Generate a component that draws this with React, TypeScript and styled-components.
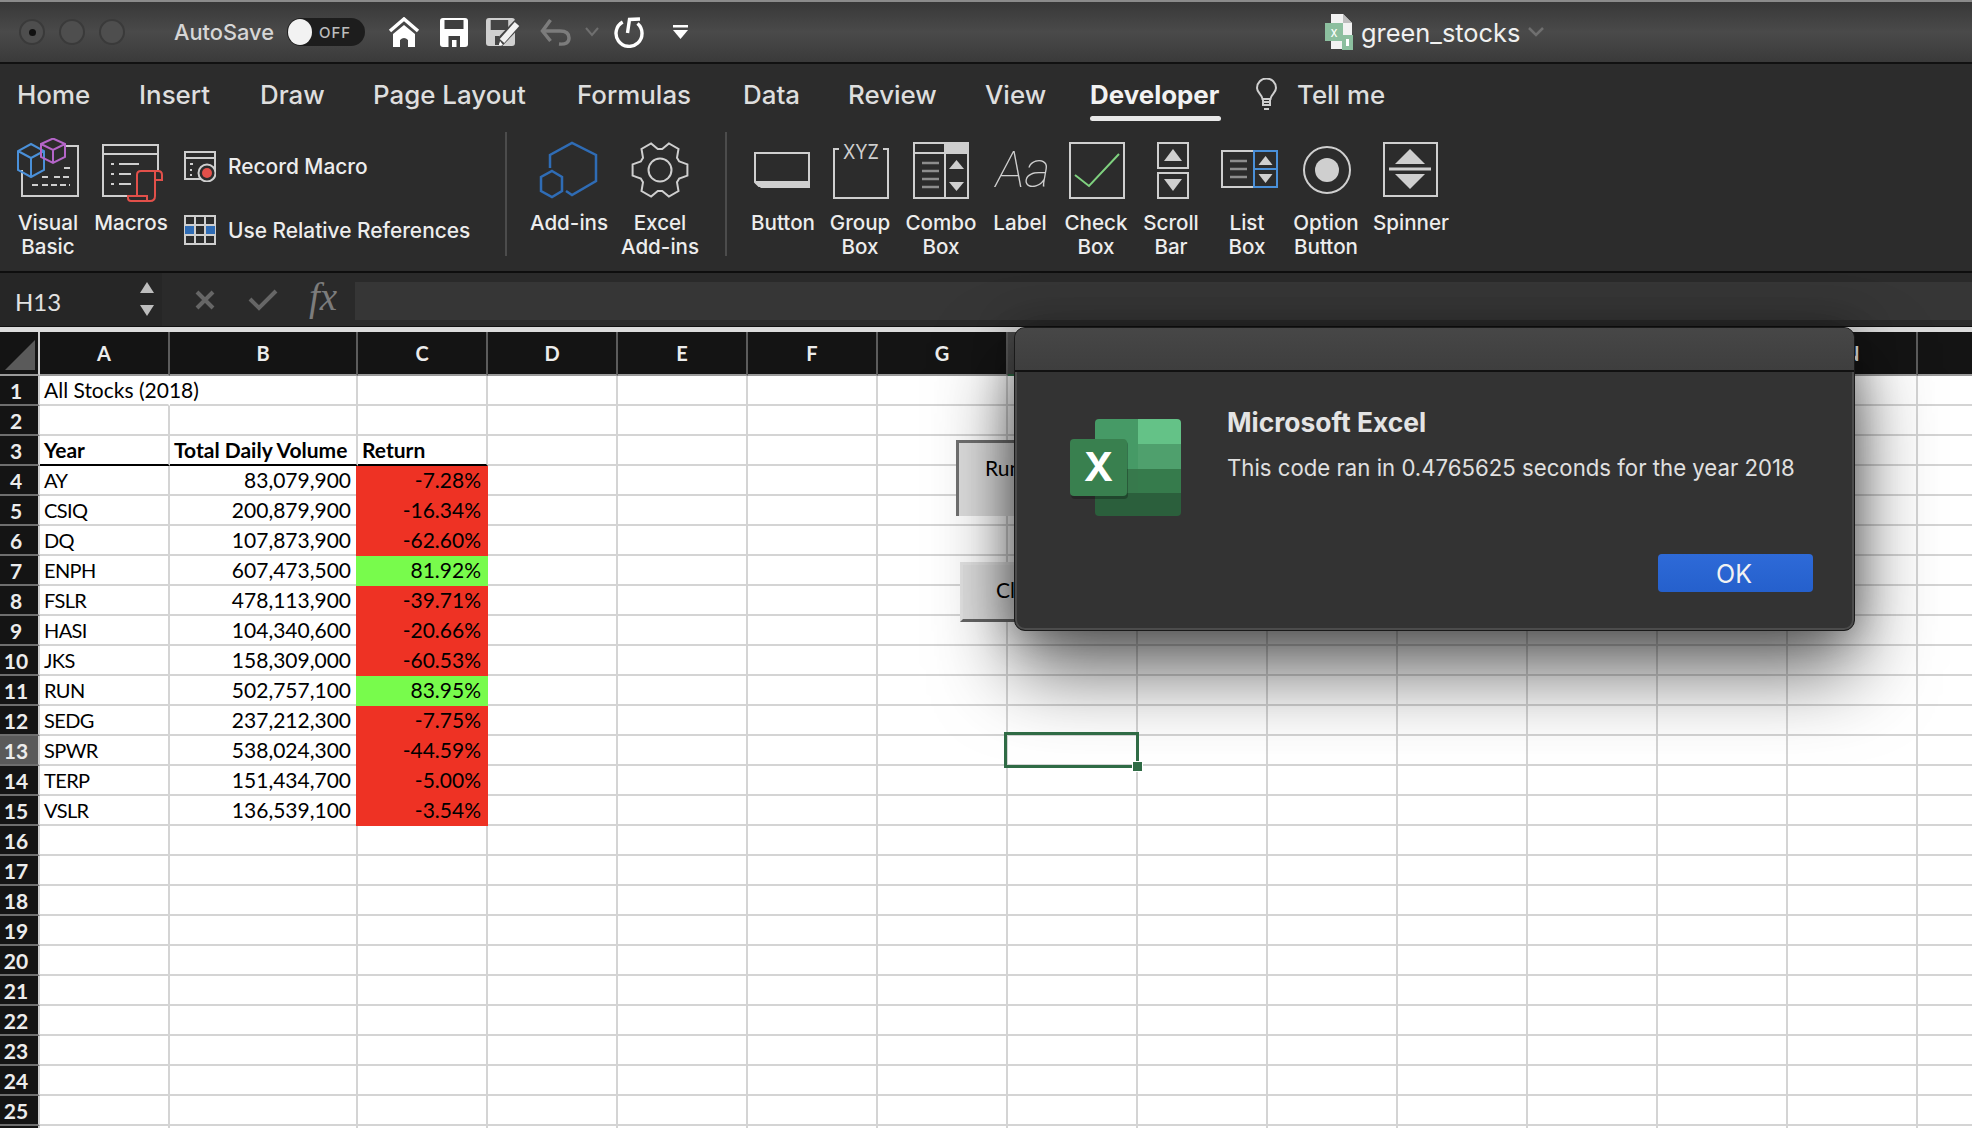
import React from "react";
import styled, { createGlobalStyle } from "styled-components";

const Global = createGlobalStyle`
  html, body { margin: 0; padding: 0; background: #fff; }
  body { width: 1972px; height: 1128px; overflow: hidden; font-family: Inter, "Liberation Sans", sans-serif; }
`;

const Page = styled.div`
  position: relative;
  width: 1972px;
  height: 1128px;
  overflow: hidden;
  display: flex;
  flex-direction: column;
`;

const TitleBar = styled.header`
  flex: none;
  box-sizing: border-box;
  border-top: 2px solid #8b8b8b;
  border-bottom: 2px solid #111;
  height: 64px;
  background: linear-gradient(#383838, #4a4a4a 50%, #3a3a3a);
  display: flex;
  align-items: center;
  padding-left: 19px;
`;
const Lights = styled.div`
  display: flex;
  gap: 14px;
`;
const Light = styled.span`
  width: 22px;
  height: 22px;
  border-radius: 50%;
  background: #4e4e4e;
  border: 2px solid #3a3a3a;
  display: flex;
  align-items: center;
  justify-content: center;
`;
const LightDot = styled.i`
  width: 7px;
  height: 7px;
  border-radius: 50%;
  background: #111;
`;
const AutoSave = styled.span`
  margin-left: 49px;
  width: 100px;
  font-size: 21.8px;
  font-weight: 500;
  color: #d6d6d6;
  white-space: nowrap;
`;
const Toggle = styled.span`
  margin-left: 13px;
  width: 78px;
  height: 28px;
  border-radius: 14px;
  background: #1d1d1d;
  display: flex;
  align-items: center;
  gap: 7px;
  font-size: 15px;
  font-weight: 500;
  color: #bdbdbd;
  letter-spacing: 1px;
`;
const Knob = styled.i`
  width: 24px;
  height: 26px;
  margin-left: 1px;
  border-radius: 50%;
  background: #f2f2f2;
`;
const QuickIcon = styled.svg<{ $gap: number }>`
  flex: none;
  margin-left: ${(p) => p.$gap}px;
`;
const FileName = styled.span`
  margin-left: 7px;
  font-size: 25.4px;
  color: #f0f0f0;
  white-space: nowrap;
  padding-top: 1px;
`;

const Ribbon = styled.section`
  flex: none;
  height: 209px;
  box-sizing: border-box;
  background: #2c2c2c;
  border-bottom: 2px solid #0e0e0e;
  display: flex;
  flex-direction: column;
`;
const Tabs = styled.nav`
  height: 54px;
  flex: none;
  display: flex;
  padding-left: 17px;
  align-items: center;
`;
const Tab = styled.span<{ $w: number; $active?: boolean }>`
  position: relative;
  width: ${(p) => p.$w}px;
  flex: none;
  height: 54px;
  line-height: 62px;
  font-size: 25.9px;
  white-space: nowrap;
  font-weight: ${(p) => (p.$active ? 700 : 500)};
  color: ${(p) => (p.$active ? "#f2f2f2" : "#dedede")};
`;
const BulbTab = styled.span`
  flex: none;
  width: 42px;
  height: 54px;
  display: flex;
  align-items: center;
  padding-top: 7px;
  box-sizing: border-box;
`;
const TabUnderline = styled.i`
  position: absolute;
  left: 0;
  width: 131px;
  bottom: -3px;
  height: 5px;
  border-radius: 3px;
  background: #e8e8e8;
`;
const Tools = styled.div`
  flex: 1;
  display: flex;
  padding-left: 8px;
  padding-top: 20px;
`;
const ToolButton = styled.div<{ $w: number }>`
  flex: none;
  width: ${(p) => p.$w}px;
  display: flex;
  flex-direction: column;
  align-items: center;
`;
const ToolLabel = styled.div`
  margin-top: 9px;
  font-size: 20.6px;
  font-weight: 500;
  line-height: 24px;
  text-align: center;
  color: #ededed;
  white-space: pre;
`;
const Separator = styled.div<{ $left: number; $right: number }>`
  flex: none;
  width: 2px;
  height: 124px;
  margin: -6px ${(p) => p.$right}px 0 ${(p) => p.$left}px;
  background: #4c4c4c;
`;
const SmallStack = styled.div`
  flex: none;
  width: 288px;
  margin-left: 10px;
  display: flex;
  flex-direction: column;
  gap: 30px;
  padding-top: 11px;
`;
const SmallRow = styled.div`
  display: flex;
  align-items: center;
  gap: 12px;
  height: 34px;
  font-size: 20.9px;
  font-weight: 500;
  color: #ededed;
  white-space: nowrap;
`;

const FormulaBar = styled.section`
  flex: none;
  height: 53px;
  background: #2a2a2a;
  display: flex;
  align-items: stretch;
`;
const NameBox = styled.div`
  flex: none;
  width: 162px;
  padding: 0 7px 2px 15px;
  box-sizing: border-box;
  background: #262626;
  display: flex;
  align-items: center;
  justify-content: space-between;
  font-family: Lato, sans-serif;
  font-size: 24px;
  color: #e2e2e2;
`;
const NameText = styled.span`
  padding-top: 6px;
`;
const NameArrows = styled.svg`
  flex: none;
`;
const FormulaIcons = styled.div`
  flex: none;
  width: 189px;
  margin-left: 4px;
  display: flex;
  align-items: center;
  gap: 33px;
  padding-left: 29px;
  box-sizing: border-box;
`;
const Fx = styled.span`
  font-family: "Liberation Serif", serif;
  font-style: italic;
  font-size: 39px;
  color: #7c7c7c;
  margin-left: -2px;
  margin-top: -6px;
`;
const FormulaInput = styled.div`
  flex: 1;
  margin: 9px 0 6px;
  background: #363636;
`;
const Band = styled.div`
  flex: none;
  height: 6px;
  background: #dcdcdc;
  border-top: 1px solid #111;
  box-sizing: border-box;
`;

const Sheet = styled.section`
  position: relative;
  flex: 1;
  min-height: 0;
  overflow: hidden;
  font-family: Lato, sans-serif;
  background: #fff;
`;
const columns = "40px 130px 188px 130px repeat(12, 130px)";
const HeaderRow = styled.div`
  display: grid;
  grid-template-columns: ${columns};
  height: 44px;
`;
const Corner = styled.div`
  background: #141414;
  border-right: 2px solid #cfcfcf;
  border-bottom: 2px solid #9a9a9a;
  display: flex;
  align-items: flex-end;
  justify-content: flex-end;
  padding: 0 3px 4px 0;
  box-sizing: border-box;
`;
const ColHead = styled.div<{ $selected?: boolean }>`
  background: ${(p) => (p.$selected ? "#4a4a4a" : "#141414")};
  border-right: 2px solid #5c5c5c;
  border-bottom: 2px solid ${(p) => (p.$selected ? "#2f6b45" : "#9a9a9a")};
  box-sizing: border-box;
  color: #ececec;
  font-size: 20px;
  font-weight: 700;
  display: flex;
  align-items: center;
  justify-content: center;
`;
const GridRow = styled.div`
  display: grid;
  grid-template-columns: ${columns};
  height: 30px;
`;
const RowHead = styled.div<{ $selected?: boolean }>`
  background: ${(p) => (p.$selected ? "#5a5a5a" : "#141414")};
  border-right: 2px solid #cfcfcf;
  border-bottom: 2px solid #6e6e6e;
  box-sizing: border-box;
  color: #ececec;
  font-size: 21px;
  font-weight: 700;
  display: flex;
  align-items: center;
  justify-content: center;
  padding-right: 6px;
`;
const Cell = styled.div<{
  $align?: string;
  $bold?: boolean;
  $fill?: string;
  $rule?: boolean;
  $over?: boolean;
  $narrow?: boolean;
}>`
  position: relative;
  z-index: ${(p) => (p.$over ? 1 : "auto")};
  box-sizing: border-box;
  padding: 0 5px 0 4px;
  font-size: ${(p) => (p.$narrow ? 20 : 21)}px;
  letter-spacing: ${(p) => (p.$narrow ? "-0.6px" : "normal")};
  line-height: 28px;
  color: #000;
  white-space: nowrap;
  text-align: ${(p) => p.$align || "left"};
  font-weight: ${(p) => (p.$bold ? 700 : 400)};
  background: ${(p) => p.$fill || "#fff"};
  border-right: 2px solid ${(p) => p.$fill || (p.$over ? "#fff" : "#d4d4d4")};
  border-bottom: 2px solid ${(p) => (p.$rule ? "#000" : p.$fill || "#d4d4d4")};
  ${(p) => (p.$fill ? `box-shadow: -2px 0 0 ${p.$fill};` : "")}
`;
const SelectionBox = styled.i`
  position: absolute;
  left: -4px;
  top: -4px;
  width: 129px;
  height: 30px;
  border: 3px solid #2f6b45;
  z-index: 2;
`;
const SelectionHandle = styled.i`
  position: absolute;
  right: -7px;
  bottom: -7px;
  width: 9px;
  height: 9px;
  background: #2f6b45;
  border: 1px solid #fff;
`;
const SheetButton = styled.div<{ $pressed?: boolean; $left: number; $top: number; $h: number }>`
  position: absolute;
  left: ${(p) => p.$left}px;
  top: ${(p) => p.$top}px;
  width: 150px;
  height: ${(p) => p.$h}px;
  box-sizing: border-box;
  background: #dfdfdf;
  color: #000;
  font-size: 21px;
  padding-top: 12px;
  padding-left: ${(p) => (p.$pressed ? 26 : 33)}px;
  border-top: 3px solid ${(p) => (p.$pressed ? "#707070" : "#e4e4e4")};
  border-left: 3px solid ${(p) => (p.$pressed ? "#707070" : "#e4e4e4")};
  border-bottom: ${(p) => (p.$pressed ? "none" : "3px solid #666")};
`;

const Dialog = styled.div`
  position: absolute;
  left: 1014px;
  top: 327px;
  width: 841px;
  height: 304px;
  box-sizing: border-box;
  border-radius: 11px;
  background: #333;
  border: 1px solid #1a1a1a;
  box-shadow: inset 0 0 0 2px #4c4c4c, 0 40px 80px rgba(0, 0, 0, 0.62), 0 0 40px rgba(0, 0, 0, 0.3);
  display: flex;
  flex-direction: column;
  overflow: hidden;
`;
const DialogHead = styled.div`
  flex: none;
  height: 44px;
  background: linear-gradient(#474747, #3e3e3e);
  border-bottom: 2px solid #111;
  box-sizing: border-box;
`;
const DialogBody = styled.div`
  flex: 1;
  display: flex;
  padding: 47px 0 0 55px;
`;
const DialogText = styled.div`
  margin-left: 46px;
  display: flex;
  flex-direction: column;
`;
const DialogTitle = styled.div`
  margin-top: -13px;
  font-size: 26.4px;
  line-height: 32px;
  font-weight: 700;
  color: #e4e4e4;
  white-space: nowrap;
`;
const DialogMessage = styled.div`
  margin-top: 15px;
  font-size: 22.2px;
  line-height: 30px;
  color: #e0e0e0;
  white-space: nowrap;
`;
const OkButton = styled.div`
  position: absolute;
  right: 41px;
  bottom: 38px;
  width: 155px;
  height: 38px;
  border-radius: 4px;
  background: linear-gradient(#2e6ad8, #2560cc);
  color: #f2f2f2;
  font-size: 25px;
  display: flex;
  align-items: center;
  justify-content: center;
  padding: 2px 3px 0 0;
  box-sizing: border-box;
`;

const L = "#cfcfcf";
const BLUE = "#2f6cb5";

const Glyph: React.FC<{ children: React.ReactNode }> = ({ children }) => (
  <svg width="72" height="64" viewBox="0 0 72 64" fill="none" stroke={L} strokeWidth="2">
    {children}
  </svg>
);

function gearPath(cx: number, cy: number) {
  const pts: string[] = [];
  const outer = 28;
  const inner = 21;
  for (let i = 0; i < 6; i++) {
    const a = (i * Math.PI) / 3;
    const seq: [number, number][] = [
      [inner, a - 0.42],
      [outer, a - 0.2],
      [outer, a + 0.2],
      [inner, a + 0.42],
    ];
    seq.forEach(([r, t]) =>
      pts.push(`${(cx + r * Math.cos(t)).toFixed(1)} ${(cy + r * Math.sin(t)).toFixed(1)}`)
    );
  }
  return "M" + pts.join("L") + "Z";
}

const Tri: React.FC<{ x: number; y: number; w: number; h: number; down?: boolean; fill?: string }> = ({
  x,
  y,
  w,
  h,
  down,
  fill = L,
}) => (
  <polygon
    stroke="none"
    fill={fill}
    points={
      down
        ? `${x - w / 2},${y} ${x + w / 2},${y} ${x},${y + h}`
        : `${x - w / 2},${y + h} ${x + w / 2},${y + h} ${x},${y}`
    }
  />
);

const icons: Record<string, React.ReactNode> = {
  vb: (
    <Glyph>
      <path d="M10 32V58H66V8H52" />
      <path d="M52 30H58M30 39H38M42 39H58M20 47H26M30 47H58" strokeDasharray="6 3" />
      <path d="M19 6L32 13V32L19 39L6 32V13ZM6 13L19 20L32 13M19 20V39" stroke="#4a90d9" />
      <path d="M41 0.5L53 6V19L41 25L29 19V6ZM29 6L41 12L53 6M41 12V25" stroke="#b565c9" />
    </Glyph>
  ),
  macros: (
    <Glyph>
      <path d="M35 58H8V7H63V32M8 16H63" />
      <path d="M16 26H19M24 26H44M16 36H19M24 36H36M16 46H19M24 46H36" />
      <path
        d="M42 58V37Q42 33 46 33H63Q67 33 67 37V42H60M60 33V58Q60 63 55 63H36Q33 63 33 60V58H52V63"
        stroke="#e2504a"
      />
    </Glyph>
  ),
  addins: (
    <Glyph>
      <path d="M17 30V17L39 5L63 17V43L39 57L33 53" stroke={BLUE} strokeWidth="2.5" />
      <path d="M19 33L29 39V53L19 59L8 53V39Z" stroke={BLUE} strokeWidth="2.5" />
    </Glyph>
  ),
  gear: (
    <Glyph>
      <path d={gearPath(36, 32)} />
      <circle cx="36" cy="32" r="11.5" />
    </Glyph>
  ),
  button: (
    <Glyph>
      <path d="M8 15H62V48H12L8 44Z" />
      <path d="M8 43H62V50H14L8 45Z" fill={L} stroke="none" />
      <path d="M61 15H63V50H61Z" fill={L} stroke="none" />
    </Glyph>
  ),
  group: (
    <Glyph>
      <path d="M15 11H10V60H64V11H59" />
      <text
        x="37"
        y="21"
        fontSize="20"
        textAnchor="middle"
        textLength="36"
        lengthAdjust="spacingAndGlyphs"
        stroke="none"
        fill={L}
        fontFamily="Inter, sans-serif"
      >
        XYZ
      </text>
    </Glyph>
  ),
  combo: (
    <Glyph>
      <rect x="9" y="5" width="54" height="55" />
      <path d="M40 5V60M9 15H40" />
      <rect x="40" y="4" width="24" height="12" fill={L} stroke="none" />
      <Tri x={51.5} y={22} w={15} h={9} />
      <Tri x={51.5} y={44} w={15} h={9} down />
      <path d="M17 25H34M17 33H34M17 41H34M17 49H34" stroke="#8d8d8d" strokeWidth="2.5" />
    </Glyph>
  ),
  label: (
    <Glyph>
      <text
        x="39"
        y="49"
        fontSize="50"
        textAnchor="middle"
        stroke="none"
        fill={L}
        fontFamily="Roboto, sans-serif"
        fontWeight="100"
        fontStyle="italic"
      >
        Aa
      </text>
    </Glyph>
  ),
  check: (
    <Glyph>
      <rect x="10" y="5" width="54" height="55" />
      <path d="M15 37L29 48L59 16" stroke="#7fd17f" />
    </Glyph>
  ),
  scroll: (
    <Glyph>
      <rect x="23" y="5" width="30" height="25" />
      <rect x="23" y="35" width="30" height="25" />
      <Tri x={38} y={11} w={18} h={12} />
      <Tri x={38} y={41} w={18} h={12} down />
    </Glyph>
  ),
  list: (
    <Glyph>
      <path d="M43 13H11V49H43" />
      <path d="M19 23H36M19 31H36M19 39H36" stroke="#8d8d8d" strokeWidth="2.5" />
      <rect x="43" y="13" width="23" height="36" stroke="#4a90d9" />
      <path d="M43 31H66" stroke="#4a90d9" />
      <Tri x={54.5} y={18} w={14} h={9} />
      <Tri x={54.5} y={36} w={14} h={9} down />
    </Glyph>
  ),
  option: (
    <Glyph>
      <circle cx="37" cy="32" r="23" />
      <circle cx="37" cy="32" r="12" fill={L} stroke="none" />
    </Glyph>
  ),
  spinner: (
    <Glyph>
      <rect x="9" y="5" width="53" height="53" />
      <path d="M14 31H56" strokeWidth="3" />
      <Tri x={35} y={11} w={30} h={15} />
      <Tri x={35} y={36} w={30} h={15} down />
    </Glyph>
  ),
};

const ExcelLogo = () => (
  <svg width="111" height="98" viewBox="0 0 111 98">
    <defs>
      <clipPath id="doc">
        <rect x="25" y="0" width="86" height="97" rx="4" />
      </clipPath>
    </defs>
    <g clipPath="url(#doc)">
      <rect x="25" y="0" width="43" height="50" fill="#469a66" />
      <rect x="68" y="0" width="43" height="25" fill="#64c287" />
      <rect x="68" y="25" width="43" height="25" fill="#4fa06d" />
      <rect x="25" y="50" width="43" height="25" fill="#37794c" />
      <rect x="68" y="50" width="43" height="24" fill="#367b4c" />
      <rect x="25" y="74" width="86" height="23" fill="#2b5f3c" />
    </g>
    <rect x="0" y="20" width="57" height="58" rx="4" fill="#000" opacity=".25" transform="translate(1 2)" />
    <rect x="0" y="20" width="57" height="57" rx="4" fill="#39804f" />
    <text
      x="28.5"
      y="62"
      textAnchor="middle"
      fontSize="40"
      fontWeight="700"
      fill="#fff"
      fontFamily="Inter, sans-serif"
    >
      X
    </text>
  </svg>
);

const rowsData: Record<number, [string, string, string, boolean?]> = {
  4: ["AY", "83,079,900", "-7.28%"],
  5: ["CSIQ", "200,879,900", "-16.34%"],
  6: ["DQ", "107,873,900", "-62.60%"],
  7: ["ENPH", "607,473,500", "81.92%", true],
  8: ["FSLR", "478,113,900", "-39.71%"],
  9: ["HASI", "104,340,600", "-20.66%"],
  10: ["JKS", "158,309,000", "-60.53%"],
  11: ["RUN", "502,757,100", "83.95%", true],
  12: ["SEDG", "237,212,300", "-7.75%"],
  13: ["SPWR", "538,024,300", "-44.59%"],
  14: ["TERP", "151,434,700", "-5.00%"],
  15: ["VSLR", "136,539,100", "-3.54%"],
};
const RED = "#ee3224";
const GREEN = "#78fb4c";
const letters = "ABCDEFGHIJKLMNO".split("");
const tabs: [string, number][] = [
  ["Home", 122],
  ["Insert", 121],
  ["Draw", 113],
  ["Page Layout", 204],
  ["Formulas", 166],
  ["Data", 105],
  ["Review", 137],
  ["View", 105],
];
const tools1: [string, string, number][] = [
  ["vb", "Visual\nBasic", 80],
  ["macros", "Macros", 86],
];
const tools2: [string, string, number][] = [
  ["addins", "Add-ins", 88],
  ["gear", "Excel\nAdd-ins", 94],
];
const tools3: [string, string, number][] = [
  ["button", "Button", 72],
  ["group", "Group\nBox", 82],
  ["combo", "Combo\nBox", 80],
  ["label", "Label", 78],
  ["check", "Check\nBox", 74],
  ["scroll", "Scroll\nBar", 76],
  ["list", "List\nBox", 76],
  ["option", "Option\nButton", 82],
  ["spinner", "Spinner", 88],
];

const Tool: React.FC<{ t: [string, string, number] }> = ({ t }) => (
  <ToolButton $w={t[2]}>
    {icons[t[0]]}
    <ToolLabel>{t[1]}</ToolLabel>
  </ToolButton>
);

const SheetRow: React.FC<{ n: number }> = ({ n }) => {
  const d = rowsData[n];
  let a: React.ReactNode = <Cell />;
  let b: React.ReactNode = <Cell />;
  let c: React.ReactNode = <Cell />;
  if (n === 1) {
    a = <Cell $over>All Stocks (2018)</Cell>;
  } else if (n === 3) {
    a = <Cell $bold $rule>Year</Cell>;
    b = <Cell $bold $rule>Total Daily Volume</Cell>;
    c = <Cell $bold $rule>Return</Cell>;
  } else if (d) {
    a = <Cell $narrow>{d[0]}</Cell>;
    b = <Cell $align="right">{d[1]}</Cell>;
    c = (
      <Cell $align="right" $fill={d[3] ? GREEN : RED}>
        {d[2]}
      </Cell>
    );
  }
  return (
    <GridRow>
      <RowHead $selected={n === 13}>{n}</RowHead>
      {a}
      {b}
      {c}
      {letters.slice(3).map((l) => (
        <Cell key={l}>
          {n === 13 && l === "H" ? (
            <SelectionBox>
              <SelectionHandle />
            </SelectionBox>
          ) : null}
        </Cell>
      ))}
    </GridRow>
  );
};

export default function App() {
  const rowNums = Array.from({ length: 26 }, (_, i) => i + 1);
  return (
    <Page>
      <Global />
      <TitleBar>
        <Lights>
          <Light>
            <LightDot />
          </Light>
          <Light />
          <Light />
        </Lights>
        <AutoSave>AutoSave</AutoSave>
        <Toggle>
          <Knob />
          OFF
        </Toggle>
        <QuickIcon $gap={23} width="32" height="30" viewBox="0 0 32 30" fill="#fff">
          <path d="M2 14L16 2L30 14" fill="none" stroke="#fff" strokeWidth="3.5" />
          <path d="M16 8L27 17V30H20V23Q16 19 12 23V30H5V17Z" />
        </QuickIcon>
        <QuickIcon $gap={20} width="28" height="29" viewBox="0 0 28 29">
          <path d="M3 0H25Q28 0 28 3V26Q28 29 25 29H3Q0 29 0 26V3Q0 0 3 0Z" fill="#fff" />
          <rect x="4.5" y="2" width="19" height="9" fill="#3f3f3f" />
          <path d="M8.5 29V18H20V29H16.5V22H12V29Z" fill="#3f3f3f" />
        </QuickIcon>
        <QuickIcon $gap={18} width="36" height="29" viewBox="0 0 36 29">
          <path d="M3 0H26Q29 0 29 3V25Q29 28 26 28H3Q0 28 0 25V3Q0 0 3 0Z" fill="#d0d0d0" />
          <rect x="4.7" y="2" width="17.5" height="10" fill="#454545" />
          <path d="M9 27V18H13V27Z" fill="#454545" />
          <path d="M13 25L32 5" stroke="#454545" strokeWidth="9" />
          <path d="M14 23L17 27L13 27Z" fill="#fff" />
          <path d="M16 23L31 6" stroke="#f2f2f2" strokeWidth="6" />
        </QuickIcon>
        <QuickIcon $gap={18} width="31" height="29" viewBox="0 0 31 29" fill="none" stroke="#7c7c7c" strokeWidth="3.5">
          <path d="M10.5 2L2.5 13L10.5 23" />
          <path d="M2.5 13H20Q29 13 29 20Q29 27 19 26" />
        </QuickIcon>
        <QuickIcon $gap={14} width="14" height="10" viewBox="0 0 14 10" fill="none" stroke="#6f6f6f" strokeWidth="2">
          <path d="M1 1L7 8L13 1" />
        </QuickIcon>
        <QuickIcon $gap={13} width="32" height="32" viewBox="0 0 30 32" fill="none" stroke="#fff" strokeWidth="3.4">
          <path d="M9.7 6A13 13 0 1 0 24.5 7.5" />
          <path d="M14.5 17L16.5 3.5L27 3" />
        </QuickIcon>
        <QuickIcon $gap={29} width="15" height="14" viewBox="0 0 15 14" fill="#fff">
          <rect x="0" y="0" width="15" height="2.5" />
          <polygon points="0,5 15,5 7.5,14" />
        </QuickIcon>
        <QuickIcon $gap={637} width="29" height="38" viewBox="0 0 29 38">
          <path d="M6 1H18L27 10V36H6Z" fill="#f2f2f2" />
          <path d="M18 1L27 10H18Z" fill="#bdbdbd" />
          <rect x="0" y="10" width="18" height="18" fill="#8cbf9f" />
          <text x="9" y="24" fontSize="13" textAnchor="middle" fill="#fff" fontFamily="Inter, sans-serif">x</text>
          <rect x="17" y="22" width="11" height="15" fill="#8cbf9f" />
          <rect x="21" y="26" width="3" height="7" fill="#fff" />
        </QuickIcon>
        <FileName>green_stocks</FileName>
        <QuickIcon $gap={8} width="16" height="10" viewBox="0 0 16 10" fill="none" stroke="#6f6f6f" strokeWidth="2.5">
          <path d="M1 1L8 8L15 1" />
        </QuickIcon>
      </TitleBar>

      <Ribbon>
        <Tabs>
          {tabs.map(([t, w]) => (
            <Tab key={t} $w={w}>
              {t}
            </Tab>
          ))}
          <Tab $w={165} $active>
            Developer
            <TabUnderline />
          </Tab>
          <BulbTab>
            <svg width="24" height="34" viewBox="0 0 24 34" fill="none" stroke="#cfcfcf" strokeWidth="2">
              <path d="M7.5 21C7 16.5 2 15 2 10A9.5 9.5 0 0 1 21 10C21 15 16 16.5 15.5 21Z" />
              <path d="M8 21V27H15V21M8 24H15M9 31H14" />
            </svg>
          </BulbTab>
          <Tab $w={90}>Tell me</Tab>
        </Tabs>
        <Tools>
          {tools1.map((t) => (
            <Tool key={t[0]} t={t} />
          ))}
          <SmallStack>
            <SmallRow>
              <svg width="32" height="32" viewBox="0 0 32 32" fill="none" stroke={L} strokeWidth="2">
                <path d="M20 29H1V2H31V20M1 8H31" />
                <path d="M6 14H9M6 20H8M6 25H8" />
                <circle cx="23" cy="23" r="8.5" fill="#2c2c2c" />
                <circle cx="23" cy="23" r="5" fill="#e2504a" stroke="none" />
              </svg>
              Record Macro
            </SmallRow>
            <SmallRow>
              <svg width="32" height="30" viewBox="0 0 32 30" fill="none" stroke={L} strokeWidth="2">
                <rect x="1" y="1" width="30" height="28" />
                <rect x="1" y="10" width="10" height="10" fill="#2f6cb5" stroke="none" />
                <rect x="21" y="10" width="10" height="10" fill="#2f6cb5" stroke="none" />
                <path d="M11 1V29M21 1V29M1 10H31M1 20H31" />
              </svg>
              Use Relative References
            </SmallRow>
          </SmallStack>
          <Separator $left={33} $right={18} />
          {tools2.map((t) => (
            <Tool key={t[0]} t={t} />
          ))}
          <Separator $left={18} $right={20} />
          {tools3.map((t) => (
            <Tool key={t[0]} t={t} />
          ))}
        </Tools>
      </Ribbon>

      <FormulaBar>
        <NameBox>
          <NameText>H13</NameText>
          <NameArrows width="16" height="34" viewBox="0 0 16 34" fill="#bdbdbd">
            <polygon points="8,0 15,11 1,11" />
            <polygon points="1,23 15,23 8,34" />
          </NameArrows>
        </NameBox>
        <FormulaIcons>
          <svg width="20" height="20" viewBox="0 0 20 20" stroke="#666" strokeWidth="4">
            <path d="M2 2L18 18M18 2L2 18" />
          </svg>
          <svg width="30" height="22" viewBox="0 0 30 22" fill="none" stroke="#666" strokeWidth="4">
            <path d="M2 10L11 19L28 2" />
          </svg>
          <Fx>fx</Fx>
        </FormulaIcons>
        <FormulaInput />
      </FormulaBar>
      <Band />

      <Sheet>
        <HeaderRow>
          <Corner>
            <svg width="30" height="30" viewBox="0 0 30 30">
              <polygon points="30,0 30,30 0,30" fill="#5a5a5a" />
            </svg>
          </Corner>
          {letters.map((l) => (
            <ColHead key={l} $selected={l === "H"}>
              {l}
            </ColHead>
          ))}
        </HeaderRow>
        {rowNums.map((n) => (
          <SheetRow key={n} n={n} />
        ))}
        <SheetButton $pressed $left={956} $top={108} $h={76}>
          Run
        </SheetButton>
        <SheetButton $left={960} $top={230} $h={60}>
          Clear
        </SheetButton>
      </Sheet>

      <Dialog>
        <DialogHead />
        <DialogBody>
          <ExcelLogo />
          <DialogText>
            <DialogTitle>Microsoft Excel</DialogTitle>
            <DialogMessage>This code ran in 0.4765625 seconds for the year 2018</DialogMessage>
          </DialogText>
        </DialogBody>
        <OkButton>OK</OkButton>
      </Dialog>
    </Page>
  );
}
